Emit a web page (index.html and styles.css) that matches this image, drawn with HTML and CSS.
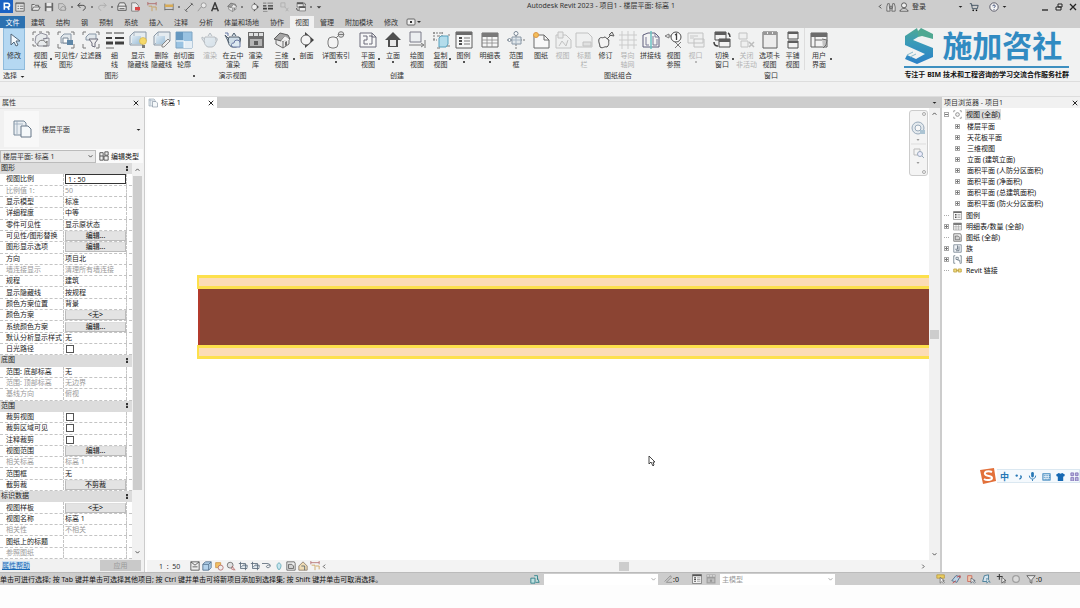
FILE: index.html
```html
<!DOCTYPE html>
<html lang="zh-CN">
<head>
<meta charset="utf-8">
<title>Autodesk Revit 2023</title>
<link rel="stylesheet" href="styles.css">
</head>
<body>
<svg class="defs" aria-hidden="true">
  <defs>
    <linearGradient id="lg" x1="0" y1="0" x2="1" y2="1"><stop offset="0" stop-color="#dbe9f4"/><stop offset="1" stop-color="#8fb6d3"/></linearGradient>
    <linearGradient id="sg" x1="0" y1="0" x2="0" y2="1"><stop offset="0" stop-color="#4fa892"/><stop offset=".4" stop-color="#3a9bb8"/><stop offset="1" stop-color="#2b80c8"/></linearGradient>
  </defs>
  <symbol id="arrow" viewBox="0 0 18 18"><path d="M6 3v11l3-3 2 4 2-1-2-4h4z" fill="#fff" stroke="#456" stroke-width="1"/></symbol>
  <symbol id="template" viewBox="0 0 18 18"><path d="M1 4V1h3M7 1h3M1 7v3M1 13v2h3M14 1h3v3" class="s"/><path d="M4 5l5-3 6 2v3l-4 1 6-1v8H6l-3-4z" fill="#e6e9eb" stroke="#667" stroke-width=".8"/><path d="M6 15a4 4 0 0 1 8-3l1-2v5h-4" class="s"/></symbol>
  <symbol id="visible" viewBox="0 0 18 18"><path d="M1 4V1h3M14 1h3v3M1 13v4h3M14 17h3v-4" class="s"/><path d="M4 6l3-3h7v9H4z" fill="#dfe6ea" stroke="#789"/><path d="M6 7h5v5H6z" fill="#fff" stroke="#678"/><path d="M10 9h6v5h-6z" fill="#46759a"/></symbol>
  <symbol id="filter" viewBox="0 0 18 18"><path d="M1 4V1h3M14 1h3v3M1 13v4h3M14 17h3v-4" class="s"/><path d="M4 6l3-3h7v6H4z" fill="#dfe6ea" stroke="#789"/><path d="M7 8h9l-3 4v4l-3-1v-3z" fill="#eee" stroke="#556"/></symbol>
  <symbol id="thin" viewBox="0 0 18 18"><path d="M0 2h6M8 2h10" stroke="#222" stroke-width="1"/><path d="M0 7h6M9 7h9" stroke="#222" stroke-width="2"/><path d="M0 12h7M9 12h9" stroke="#222" stroke-width="3"/><path d="M0 17h8" stroke="#555"/></symbol>
  <symbol id="showh" viewBox="0 0 18 18"><path d="M1 5l4-4h12v9l-4 4H1z" fill="#e4ebf0" stroke="#789"/><path d="M5 1v9h12M1 14l4-4" fill="none" stroke="#89a" stroke-width=".8"/><path d="M3 5h9v8H3z" fill="url(#lg)"/><circle cx="14" cy="10" r="3.500" fill="#f6d553" stroke="#c9a22c" stroke-width=".6"/><path d="M13 14h3v3h-3z" fill="#666"/></symbol>
  <symbol id="delh" viewBox="0 0 18 18"><path d="M1 5l4-4h12v9l-4 4H1z" fill="#e4ebf0" stroke="#789"/><path d="M5 1v9h12M1 14l4-4" fill="none" stroke="#89a" stroke-width=".8"/><path d="M3 5h9v8H3z" fill="url(#lg)"/><path d="M9 14l6-6 2 2-6 6H9z" fill="#eee" stroke="#777"/></symbol>
  <symbol id="cut" viewBox="0 0 18 18"><path d="M1 1h16v16H1z" fill="#8bbbe0" stroke="#6b98bb"/><path d="M1 1h7v8H1z" fill="#4e89b8"/><path d="M9 10h8v7H9z" fill="#e3eef6"/><path d="M1 10h8v7" fill="none" stroke="#fff"/></symbol>
  <symbol id="teapot" viewBox="0 0 18 18"><path d="M4 6c-2 5 0 9 3 10h4c4-1 5-6 3-10zM4 8L1 6v2l3 4M14 7c3-1 3 3 0 5M7 5l2-3 2 3" fill="url(#lg)" stroke="#345"/></symbol>
  <symbol id="cloudpot" viewBox="0 0 18 18"><path d="M5 6c-2 5 0 9 3 10h4c4-1 5-6 3-10zM5 8L1 4l4 8M15 7c2-2 2 3 0 5M8 5l2-3 2 3" fill="#c9d9e4" stroke="#345"/><path d="M1 2h3v3M10 12a3 3 0 0 1 6 0v4H9a2 2 0 0 1 1-4z" fill="#dbe8f1" stroke="#569"/></symbol>
  <symbol id="gallery" viewBox="0 0 18 18"><path d="M1 1h16v16H1z" fill="#555"/><path d="M2 2h4v3H2zM7 2h4v3H7zM12 2h4v3h-4z" fill="#ddd"/><path d="M3 8h12v7H3z" fill="#aaa"/><path d="M7 10h4v4H7z" fill="#444"/></symbol>
  <symbol id="house3" viewBox="0 0 18 18"><path d="M3 8v5l7 4 6-4V7l-6 3z" fill="#ececec" stroke="#555"/><path d="M10 10v7" stroke="#555"/><path d="M1 8l6-6 8 2 2 4-2 0-3-3-4 5z" fill="#999" stroke="#444"/><path d="M8 10l4-5 4 3v1l-6 1z" fill="#f4f4f4"/><path d="M12 11l2-1v4l-2 1z" fill="#555"/></symbol>
  <symbol id="section" viewBox="0 0 18 18"><path d="M7 1l9 8-9 8z" fill="#222"/><circle cx="8" cy="9" r="5" fill="#f6f6f6" stroke="#444"/></symbol>
  <symbol id="callout" viewBox="0 0 18 18"><rect x="1" y="6" width="10" height="11" rx="4" fill="#f4f4f4" stroke="#666"/><path d="M9 7l3-3" class="s"/><circle cx="14" cy="3.500" r="2.800" fill="#ddd" stroke="#666"/><path d="M11 3.500h6" class="s"/></symbol>
  <symbol id="plan" viewBox="0 0 18 18"><path d="M1 2h12l4 4v10H1z" fill="#f8f8f8" stroke="#556"/><path d="M4 5h4v4H5v4h4M10 5h3v8h-3M13 2v4h4" fill="none" stroke="#556"/></symbol>
  <symbol id="elev" viewBox="0 0 18 18"><path d="M9 1l8 8h-3v7H4V9H1z" fill="#333"/><path d="M6 9h6v6H6z" fill="#e8e8e8"/></symbol>
  <symbol id="draft" viewBox="0 0 18 18"><path d="M2 1h11v10H2z" fill="#eceff1" stroke="#667"/><path d="M1 14h14M13 12l3 2-3 2M17 9v8" class="s"/></symbol>
  <symbol id="dup" viewBox="0 0 18 18"><path d="M1 2h10M2 1v9M10 1v4M1 9h4" class="s" stroke-dasharray="2 1"/><path d="M7 7l2-2h7v8l-2 3H7z" fill="#a9d9ea" stroke="#3d94b5"/><path d="M5 5h3M15 15h3M5 17h3M16 4h2" class="s"/></symbol>
  <symbol id="legend" viewBox="0 0 18 18"><path d="M1 1h16v16H1z" fill="#f8f8f8" stroke="#444"/><path d="M1 1h16v3H1z" fill="#555"/><path d="M4 7h3M4 10h3M4 13h3" stroke="#333" stroke-width="2"/><path d="M9 7h6M9 10h6M9 13h6" stroke="#666"/></symbol>
  <symbol id="sched" viewBox="0 0 18 18"><path d="M1 2h16v14H1z" fill="#f8f8f8" stroke="#555"/><path d="M1 2h16v4H1z" fill="#666"/><path d="M1 9h16M1 12h16M6 6v10M11 6v10" stroke="#777" stroke-width=".8"/></symbol>
  <symbol id="scope" viewBox="0 0 18 18"><path d="M9 0v18M0 9h18" class="s" stroke-dasharray="3 1"/><path d="M5 6h9v7H5z" fill="#dfe6ea" stroke="#789"/><path d="M9 6v7M5 9h9" stroke="#9ab"/><circle cx="9" cy="2.500" r="2" fill="#fff" stroke="#678"/><circle cx="2.500" cy="9" r="1.500" fill="#fff" stroke="#678"/></symbol>
  <symbol id="sheet" viewBox="0 0 18 18"><path d="M2 4h10l5 5v8H2z" fill="#fafafa" stroke="#555"/><path d="M12 4v5h5" fill="none" stroke="#555"/><circle cx="4" cy="4" r="2.500" fill="#f4b740" stroke="#d8862a"/></symbol>
  <symbol id="vsheet" viewBox="0 0 18 18"><path d="M2 4h10l5 5v8H2z" fill="#eee" stroke="#555"/><path d="M4 1h5v6H4zM5 15l3-5 4 5 2-6" fill="#ddd" stroke="#555"/></symbol>
  <symbol id="titleblk" viewBox="0 0 18 18"><path d="M1 2h12l4 4v10H1z" fill="#eee" stroke="#555"/><path d="M8 11h8v4H8z" fill="#bbb" stroke="#555"/></symbol>
  <symbol id="rev" viewBox="0 0 18 18"><path d="M2 8c2-3 4 0 5-2 3 0 3 3 5 3-1 3 1 4-2 7-3-1-4 2-7 0 0-3-2-5-1-8z" fill="#f4f4f4" stroke="#333"/><path d="M10 8l4-4M12 4l3-3 2 4z" fill="#ddd" stroke="#444"/></symbol>
  <symbol id="grid" viewBox="0 0 18 18"><path d="M3 0v18M9 0v18M15 0v18M0 4h18M0 9h18M0 14h18" stroke="#777" fill="none"/></symbol>
  <symbol id="match" viewBox="0 0 18 18"><path d="M1 4l5-2h7l4 4v10H1z" fill="#f4f4f4" stroke="#446"/><path d="M4 6v8h3M13 2v4h4M11 5v9h4V8" fill="none" stroke="#668"/><path d="M9 0v18" stroke="#5bb" stroke-width="1.500"/></symbol>
  <symbol id="vref" viewBox="0 0 18 18"><path d="M0 5l4-2v4zM4 5h2M10 11l6 6M16 11l-6 6" class="s"/><circle cx="11" cy="6" r="5" fill="#fff" stroke="#333"/><path d="M10 4l1.500-1v6" stroke="#222" fill="none" stroke-width="1.300"/></symbol>
  <symbol id="viewport" viewBox="0 0 18 18"><path d="M1 2h15v10H1zM7 8h10v8H7z" fill="#eee" stroke="#555"/><path d="M3 5h8M3 7h4" class="s"/></symbol>
  <symbol id="switch" viewBox="0 0 18 18"><path d="M2 1h11v8H2zM6 8h11v8H6z" fill="#f4f4f4" stroke="#333"/><path d="M2 1h11v3H2zM6 8h11v3H6z" fill="#444"/><path d="M15 2c2 1 2 2 2 4M1 11c0 3 1 4 4 4" fill="none" stroke="#222" stroke-width="1.500"/></symbol>
  <symbol id="closew" viewBox="0 0 18 18"><path d="M1 2h8v6H1zM3 10h7v6H3z" fill="#eee" stroke="#555"/><path d="M11 11l5 5M16 11l-5 5" stroke="#444" stroke-width="1.500"/></symbol>
  <symbol id="tabv" viewBox="0 0 18 18"><path d="M2 1h14v16H2z" fill="#ececec" stroke="#444"/><path d="M2 1h14v3H2z" fill="#888"/><path d="M6 1h1v2H6zM11 1h1v2h-1z" fill="#eee"/></symbol>
  <symbol id="tile" viewBox="0 0 18 18"><path d="M4 1h10v7H4zM4 10h10v7H4z" fill="#f4f4f4" stroke="#333"/><path d="M4 1h10v2H4zM4 10h10v2H4z" fill="#444"/></symbol>
  <symbol id="ui" viewBox="0 0 18 18"><path d="M1 2h16v14H1z" fill="#f4f4f4" stroke="#444"/><path d="M1 2h16v4H1z" fill="#555"/><path d="M5 6v10M5 9h7" stroke="#555"/><path d="M12 8l5 1-1 5-3 3" fill="#bbb" stroke="#555"/></symbol>

  <symbol id="q-list" viewBox="0 0 12 12"><path d="M1 1h10v10H1z" fill="#eee" stroke="#444"/><path d="M1 2h10M3 5h2M6 5h4M3 8h2M6 8h4" stroke="#444"/></symbol>
  <symbol id="q-open" viewBox="0 0 12 12"><path d="M1 10V3h3l1 1h4v2M1 10l2-4h8l-2 4z" fill="#eee" stroke="#444"/></symbol>
  <symbol id="q-save" viewBox="0 0 12 12"><path d="M1 1h10v10H1z" fill="#555"/><path d="M3 1h6v4H3zM3 7h6v4H3z" fill="#eee"/></symbol>
  <symbol id="q-sync" viewBox="0 0 12 12"><path d="M2 2h5l3 3v5H4L2 8z" fill="#ccc" stroke="#888"/><path d="M5 10a3 3 0 1 1 5 0" fill="none" stroke="#888"/></symbol>
  <symbol id="q-undo" viewBox="0 0 12 12"><path d="M4 1L1 4l3 3M1 4h6c4 0 4 5 0 6" fill="none" stroke="#333" stroke-width="1.200"/></symbol>
  <symbol id="q-redo" viewBox="0 0 12 12"><path d="M8 1l3 3-3 3M11 4H5C1 4 1 9 5 10" fill="none" stroke="#aaa" stroke-width="1.200"/></symbol>
  <symbol id="q-print" viewBox="0 0 12 12"><path d="M3 1h6l2 4v5H1V5z" fill="#eee" stroke="#333"/><path d="M1 5h10M3 8h6" stroke="#333"/></symbol>
  <symbol id="q-pdf" viewBox="0 0 12 12"><path d="M2 1h5l3 3v7H2z" fill="#eee" stroke="#666"/><path d="M6 6h6v4H6z" fill="#d33"/></symbol>
  <symbol id="q-meas" viewBox="0 0 12 12"><path d="M1 2h10M1 0v4M11 0v4" stroke="#a55" fill="none"/><path d="M2 5h4v6M7 6h4v4" stroke="#c7903d" fill="none"/></symbol>
  <symbol id="q-dim" viewBox="0 0 12 12"><path d="M1 2v8M11 2v8M1 9h10" stroke="#555" fill="none"/><path d="M1 3h10v3H1z" fill="#d9a441"/></symbol>
  <symbol id="q-align" viewBox="0 0 12 12"><path d="M2 10l8-8M1 9l3 3M8 1l3 3" stroke="#333" fill="none"/></symbol>
  <symbol id="q-tag" viewBox="0 0 12 12"><path d="M1 11l4-5" stroke="#888"/><circle cx="8" cy="4" r="3" fill="#eee" stroke="#888"/></symbol>
  <symbol id="q-a" viewBox="0 0 12 12"><path d="M2 11L6 1l4 10M4 8h4" fill="none" stroke="#222" stroke-width="1.800"/></symbol>
  <symbol id="q-close" viewBox="0 0 12 12"><path d="M1 1h5v5H1zM6 6l4 5M10 7l-3 4" fill="none" stroke="#aaa"/></symbol>
  <symbol id="bino" viewBox="0 0 12 12"><path d="M2 2h2v3l1 6H1V6zM8 2h2l1 4v5H7l1-6zM5 5h2v3H5z" fill="#ddd" stroke="#444" stroke-width=".8"/></symbol>
  <symbol id="user" viewBox="0 0 12 12"><circle cx="6" cy="4" r="3" fill="#eee" stroke="#444"/><path d="M1 11c1-4 9-4 10 0z" fill="#eee" stroke="#444"/></symbol>
  <symbol id="cart" viewBox="0 0 12 12"><path d="M1 2h2l1 6h6l1-4H3" fill="none" stroke="#345"/><circle cx="5" cy="10" r="1"/><circle cx="9" cy="10" r="1"/></symbol>
  <symbol id="help" viewBox="0 0 12 12"><circle cx="6" cy="6" r="5" fill="#f4f4f4" stroke="#445"/><path d="M4.500 5c0-2 3-2 3 0 0 1-1.500 1-1.500 2M6 8.500v1" fill="none" stroke="#236"/></symbol>
  <symbol id="x" viewBox="0 0 8 8"><path d="M1 1l6 6M7 1L1 7" stroke="#222" stroke-width="1.300"/></symbol>
  <symbol id="restore" viewBox="0 0 8 8"><path d="M3 1h4v3H3zM1 4h5v3H1z" fill="#ddd" stroke="#222"/></symbol>
  <symbol id="min" viewBox="0 0 8 8"><path d="M1 7h6" stroke="#222" stroke-width="1.300"/></symbol>
  <symbol id="down" viewBox="0 0 8 8"><path d="M1 3h6L4 6z" fill="#222"/></symbol>
  <symbol id="cup" viewBox="0 0 8 8"><path d="M1 6l3-3 3 3" fill="none" stroke="#333" stroke-width="1.300"/></symbol>
  <symbol id="cdown" viewBox="0 0 8 8"><path d="M1 2l3 3 3-3" fill="none" stroke="#333" stroke-width="1.300"/></symbol>
  <symbol id="cright" viewBox="0 0 8 8"><path d="M2 1l3 3-3 3" fill="none" stroke="#222" stroke-width="1.300"/></symbol>
  <symbol id="cleft" viewBox="0 0 8 8"><path d="M5 1L2 4l3 3" fill="none" stroke="#222" stroke-width="1.300"/></symbol>
  <symbol id="pages" viewBox="0 0 20 20"><path d="M2 2h10l2 2v12H2z" fill="#e9eef2" stroke="#789"/><path d="M9 7h7l3 3v8H9z" fill="#f5f8fa" stroke="#678"/><path d="M2 5h9M5 2v13" stroke="#9ab" stroke-width=".8"/></symbol>
  <symbol id="etype" viewBox="0 0 12 12"><path d="M1 2h4v9H1zM7 1h4v4H7zM6 6h5v5H6zM1 6h4" fill="#eee" stroke="#444"/></symbol>
  <symbol id="t-views" viewBox="0 0 12 12"><path d="M1 3V1h2M9 1h2v2M1 9v2h2M9 11h2V9" fill="none" stroke="#666"/><circle cx="6" cy="6" r="2.500" fill="#eee" stroke="#666"/></symbol>
  <symbol id="t-sheet" viewBox="0 0 12 12"><path d="M1 1h9l1 2v8H1z" fill="#eee" stroke="#444"/><path d="M3 4h4l2 2v3H3z" fill="#ccc" stroke="#444"/></symbol>
  <symbol id="t-fam" viewBox="0 0 12 12"><path d="M1 1h10v10H1z" fill="#eef2f5" stroke="#567"/><path d="M6 2v5H3M8 3v6H4" fill="none" stroke="#345"/></symbol>
  <symbol id="t-grp" viewBox="0 0 12 12"><path d="M3 1H1v10h2M9 1h2v10H9M4 3h3v3H4zM6 7h3v3" fill="none" stroke="#456"/></symbol>
  <symbol id="t-link" viewBox="0 0 12 12"><path d="M1 4h4v4H1zM7 4h4v4H7zM4 6h4" fill="#f0d66a" stroke="#b8982a" stroke-width="1.200"/></symbol>
  <symbol id="cube" viewBox="0 0 12 12"><path d="M1 4l3-3h7v7l-3 3H1zM1 4h7v7M8 4l3-3" fill="#a9cdea" stroke="#357"/></symbol>
  <symbol id="mail" viewBox="0 0 12 12"><path d="M1 1h10v10H1zM1 1l5 4 5-4M3 7h6" fill="#eee" stroke="#333"/></symbol>
  <symbol id="sun" viewBox="0 0 12 12"><path d="M2 2h6v6H2z" fill="#f2b84b" stroke="#c8842a"/><circle cx="8" cy="8" r="3" fill="#eee" stroke="#a55"/></symbol>
  <symbol id="shadow" viewBox="0 0 12 12"><circle cx="5" cy="5" r="3.500" fill="#ddd" stroke="#555"/><path d="M6 9l4 2M7 6l4 5" stroke="#a44"/></symbol>
  <symbol id="crop" viewBox="0 0 12 12"><path d="M3 1v8h8M1 3h8v8M4 7l2-2h5v3" fill="#cfdbe4" stroke="#456"/></symbol>
  <symbol id="glass" viewBox="0 0 12 12"><path d="M0 3h6c5 0 5 5 1 5-3 0-2-4 3-3" fill="none" stroke="#456"/></symbol>
  <symbol id="bulb" viewBox="0 0 12 12"><path d="M6 2c3 2 3 4 1 8H5C3 6 3 4 6 2z" fill="#bfe3ee" stroke="#49a"/></symbol>
  <symbol id="house" viewBox="0 0 12 12"><path d="M1 6l5-5 5 5v5H1z" fill="#f0d9a8" stroke="#765"/><path d="M4 6h4v5" fill="none" stroke="#345"/></symbol>
  <symbol id="ptr" viewBox="0 0 12 12"><path d="M1 1h9v4H1z" fill="#f0cf4d" stroke="#b8922a"/><path d="M5 4v7l2-2 2 2 1-1-2-2h2z" fill="#fff" stroke="#444" stroke-width=".8"/></symbol>
  <symbol id="ptr2" viewBox="0 0 12 12"><path d="M1 8l5-6 5 1-4 7z" fill="#b9d6ec" stroke="#357"/><path d="M7 4l4-2v3M2 11l4-3" stroke="#c33" fill="none"/></symbol>
  <symbol id="ptr3" viewBox="0 0 12 12"><path d="M2 2h5v7H2z" fill="#f5c7a8" stroke="#c54"/><path d="M6 5v6l2-2 2 2 1-1-2-2h2z" fill="#fff" stroke="#345" stroke-width=".8"/></symbol>
  <symbol id="ptr4" viewBox="0 0 12 12"><path d="M2 9l2-7 5-1v8z" fill="#d6e8f4" stroke="#268"/><path d="M7 5v6l2-2 2 1-2-3z" fill="#fff" stroke="#268" stroke-width=".8"/></symbol>
  <symbol id="ptr5" viewBox="0 0 12 12"><path d="M4 0v7M1 3h7" stroke="#222" stroke-width="1.300"/><path d="M7 4v7l2-2 1 2 1-1-1-2h2z" fill="#fff" stroke="#222" stroke-width=".8"/></symbol>
  <symbol id="ring" viewBox="0 0 12 12"><circle cx="6" cy="6" r="4" fill="#ddd" stroke="#999" stroke-width="1.500"/></symbol>
  <symbol id="funnel" viewBox="0 0 12 12"><path d="M1 2h10L7 7v4L5 10V7z" fill="#eee" stroke="#444"/></symbol>
  <symbol id="wset" viewBox="0 0 12 12"><path d="M1 5h5v6H1zM5 2h4v5M9 5l2 5H7" fill="#bfe0e0" stroke="#267d86"/></symbol>
  <symbol id="pencil" viewBox="0 0 12 12"><path d="M2 9l7-7 1 2-6 6h7" fill="none" stroke="#888"/></symbol>
</svg>

<header class="titlebar">
  <button class="app" aria-label="Revit"><svg viewBox="0 0 12 12"><path d="M0 0h12v12H0z" fill="#1c62c4"/><path d="M4 9V3h3a1.500 1.500 0 0 1 0 3.500H4M7 6.500L8.500 9" fill="none" stroke="#fff" stroke-width="1.500"/></svg></button>
  <div class="quick">
    <svg><use href="#q-list"/></svg><svg class="g5"><use href="#q-open"/></svg><svg class="g3"><use href="#q-save"/></svg><svg class="g3"><use href="#q-sync"/></svg><i></i>
    <svg class="g3"><use href="#q-undo"/></svg><i></i><svg class="g3"><use href="#q-redo"/></svg><i></i>
    <svg class="g3"><use href="#q-print"/></svg><svg class="g3"><use href="#q-pdf"/></svg><svg class="g8"><use href="#q-meas"/></svg><svg class="g8"><use href="#q-dim"/></svg><i></i>
    <svg class="g3"><use href="#q-align"/></svg><svg class="g3"><use href="#q-tag"/></svg><svg class="g3"><use href="#q-a"/></svg><svg class="g8"><use href="#house3"/></svg><i></i><svg class="g5"><use href="#section"/></svg><svg class="g3"><use href="#thin"/></svg><svg class="g8"><use href="#q-close"/></svg><svg class="g5"><use href="#switch"/></svg><i></i><svg class="small g3"><use href="#down"/></svg>
  </div>
  <h1>Autodesk Revit 2023 - 项目1 - 楼层平面: 标高 1</h1>
  <div class="account">
    <svg class="tiny"><use href="#cleft"/></svg><svg><use href="#bino"/></svg><svg><use href="#user"/></svg><span>登录</span>
    <svg class="tiny acc-gap"><use href="#down"/></svg><svg><use href="#cart"/></svg><svg class="help"><use href="#help"/></svg><svg class="tiny"><use href="#down"/></svg>
  </div>
  <div class="win">
    <button aria-label="最小化"><svg><use href="#min"/></svg></button><button aria-label="还原"><svg><use href="#restore"/></svg></button><button aria-label="关闭"><svg><use href="#x"/></svg></button>
  </div>
</header>

<nav class="tabs">
  <button class="file">文件</button>
  <button>建筑</button><button>结构</button><button>钢</button><button>预制</button><button>系统</button><button>插入</button><button>注释</button><button>分析</button><button>体量和场地</button><button>协作</button><button class="on">视图</button><button>管理</button><button>附加模块</button><button>修改</button>
  <button class="toggle" aria-label="显示选项"><svg viewBox="0 0 16 8"><rect x="1" y="1" width="8" height="6" rx="1" fill="#eee" stroke="#666"/><path d="M4 3h2v2H4zM11 3h4l-2 2z" fill="#333"/></svg></button>
</nav>

<section class="ribbon">
  <div class="group sel">
    <div class="tools"><button class="tool on"><svg><use href="#arrow"/></svg><span>修改</span></button></div>
    <h2>选择 <svg class="tiny"><use href="#down"/></svg></h2>
  </div>
  <div class="group">
    <div class="tools">
      <button class="tool w25 side"><svg><use href="#template"/></svg><span>视图<br>样板</span></button>
      <button class="tool w26"><svg><use href="#visible"/></svg><span>可见性/<br>图形</span></button>
      <button class="tool w24"><svg><use href="#filter"/></svg><span>过滤器</span></button>
      <button class="tool w23"><svg><use href="#thin"/></svg><span>细<br>线</span></button>
      <button class="tool w24"><svg><use href="#showh"/></svg><span>显示<br>隐藏线</span></button>
      <button class="tool w23"><svg><use href="#delh"/></svg><span>删除<br>隐藏线</span></button>
      <button class="tool w22"><svg><use href="#cut"/></svg><span>剖切面<br>轮廓</span></button>
    </div>
    <h2 class="launch">图形</h2>
  </div>
  <div class="group gap3">
    <div class="tools">
      <button class="tool w24" disabled><svg><use href="#teapot"/></svg><span>渲染</span></button>
      <button class="tool w22"><svg><use href="#cloudpot"/></svg><span>在云中<br>渲染</span></button>
      <button class="tool w23"><svg><use href="#gallery"/></svg><span>渲染<br>库</span></button>
    </div>
    <h2>演示视图</h2>
  </div>
  <div class="group">
    <div class="tools">
      <button class="tool w29 side"><svg><use href="#house3"/></svg><span>三维<br>视图</span></button>
      <button class="tool w21"><svg><use href="#section"/></svg><span>剖面</span></button>
      <button class="tool w38 under"><svg><use href="#callout"/></svg><span>详图索引</span></button>
      <button class="tool w26 side"><svg><use href="#plan"/></svg><span>平面<br>视图</span></button>
      <button class="tool w24 under"><svg><use href="#elev"/></svg><span>立面</span></button>
      <button class="tool w24"><svg><use href="#draft"/></svg><span>绘图<br>视图</span></button>
      <button class="tool w23 side"><svg><use href="#dup"/></svg><span>复制<br>视图</span></button>
      <button class="tool w23 under"><svg><use href="#legend"/></svg><span>图例</span></button>
      <button class="tool w30 under"><svg><use href="#sched"/></svg><span>明细表</span></button>
      <button class="tool w22"><svg><use href="#scope"/></svg><span>范围<br>框</span></button>
    </div>
    <h2>创建</h2>
  </div>
  <div class="group gap3">
    <div class="tools">
      <button class="tool w22"><svg><use href="#sheet"/></svg><span>图纸</span></button>
      <button class="tool w21" disabled><svg><use href="#vsheet"/></svg><span>视图</span></button>
      <button class="tool w22" disabled><svg><use href="#titleblk"/></svg><span>标题<br>栏</span></button>
      <button class="tool w21"><svg><use href="#rev"/></svg><span>修订</span></button>
      <button class="tool w23" disabled><svg><use href="#grid"/></svg><span>导向<br>轴网</span></button>
      <button class="tool w23"><svg><use href="#match"/></svg><span>拼接线</span></button>
      <button class="tool w23"><svg><use href="#vref"/></svg><span>视图<br>参照</span></button>
      <button class="tool w21 under" disabled><svg><use href="#viewport"/></svg><span>视口</span></button>
    </div>
    <h2>图纸组合</h2>
  </div>
  <div class="group gap3">
    <div class="tools">
      <button class="tool w26 side"><svg><use href="#switch"/></svg><span>切换<br>窗口</span></button>
      <button class="tool w23" disabled><svg><use href="#closew"/></svg><span>关闭<br>非活动</span></button>
      <button class="tool w23"><svg><use href="#tabv"/></svg><span>选项卡<br>视图</span></button>
      <button class="tool w23"><svg><use href="#tile"/></svg><span>平铺<br>视图</span></button>
      <button class="tool w29 side split"><svg><use href="#ui"/></svg><span>用户<br>界面</span></button>
    </div>
    <h2>窗口</h2>
  </div>
  <div class="brand">
    <div class="brand-row">
      <svg viewBox="0 0 30 36"><path d="M29 11V6L17 0l-3 3v6l4-1z" fill="#4fa892"/><path d="M13 0L1 8v9l20 9-9 5-9-4-2 4 12 5 16-7v-9L9 12l5-3V3z" fill="url(#sg)"/><path d="M3 27l6-3M6 29l6-3" stroke="#8bc" fill="none"/></svg>
      <strong>施加咨社</strong>
    </div>
    <p>专注于 BIM 技术和工程咨询的学习交流合作服务社群</p>
  </div>
</section>
<div class="options"></div>

<main class="work">
  <aside class="props">
    <header class="panel-head"><h2>属性</h2><button aria-label="关闭"><svg><use href="#x"/></svg></button></header>
    <div class="type"><span class="thumb"><svg><use href="#pages"/></svg></span><span class="type-name">楼层平面</span><svg class="tiny"><use href="#down"/></svg></div>
    <div class="inst"><span class="pick"><select aria-label="实例"><option>楼层平面: 标高 1</option></select><svg class="tiny"><use href="#cdown"/></svg></span><button><svg><use href="#etype"/></svg>编辑类型</button></div>
    <div class="sheet">
      <table>
        <tbody>
        <tr class="cat"><th colspan="3">图形</th></tr>
        <tr><th>视图比例</th><td><input class="scale" aria-label="视图比例" value="1 : 50"></td><td></td></tr>
        <tr class="off"><th>比例值 1:</th><td>50</td><td></td></tr>
        <tr><th>显示模型</th><td>标准</td><td></td></tr>
        <tr><th>详细程度</th><td>中等</td><td></td></tr>
        <tr><th>零件可见性</th><td>显示原状态</td><td></td></tr>
        <tr><th>可见性/图形替换</th><td><button>编辑...</button></td><td></td></tr>
        <tr><th>图形显示选项</th><td><button>编辑...</button></td><td></td></tr>
        <tr><th>方向</th><td>项目北</td><td></td></tr>
        <tr class="off"><th>墙连接显示</th><td>清理所有墙连接</td><td></td></tr>
        <tr><th>规程</th><td>建筑</td><td></td></tr>
        <tr><th>显示隐藏线</th><td>按规程</td><td></td></tr>
        <tr><th>颜色方案位置</th><td>背景</td><td></td></tr>
        <tr><th>颜色方案</th><td><button>&lt;无&gt;</button></td><td></td></tr>
        <tr><th>系统颜色方案</th><td><button>编辑...</button></td><td></td></tr>
        <tr><th>默认分析显示样式</th><td>无</td><td></td></tr>
        <tr><th><label for="c1">日光路径</label></th><td><input type="checkbox" id="c1"></td><td></td></tr>
        <tr class="cat"><th colspan="3">底图</th></tr>
        <tr><th>范围: 底部标高</th><td>无</td><td></td></tr>
        <tr class="off"><th>范围: 顶部标高</th><td>无边界</td><td></td></tr>
        <tr class="off"><th>基线方向</th><td>俯视</td><td></td></tr>
        <tr class="cat"><th colspan="3">范围</th></tr>
        <tr><th><label for="c2">裁剪视图</label></th><td><input type="checkbox" id="c2"></td><td></td></tr>
        <tr><th><label for="c3">裁剪区域可见</label></th><td><input type="checkbox" id="c3"></td><td></td></tr>
        <tr><th><label for="c4">注释裁剪</label></th><td><input type="checkbox" id="c4"></td><td></td></tr>
        <tr><th>视图范围</th><td><button>编辑...</button></td><td></td></tr>
        <tr class="off"><th>相关标高</th><td>标高 1</td><td></td></tr>
        <tr><th>范围框</th><td>无</td><td></td></tr>
        <tr><th>截剪裁</th><td><button>不剪裁</button></td><td></td></tr>
        <tr class="cat"><th colspan="3">标识数据</th></tr>
        <tr><th>视图样板</th><td><button>&lt;无&gt;</button></td><td></td></tr>
        <tr><th>视图名称</th><td>标高 1</td><td></td></tr>
        <tr class="off"><th>相关性</th><td>不相关</td><td></td></tr>
        <tr><th>图纸上的标题</th><td></td><td></td></tr>
        <tr class="off"><th>参照图纸</th><td></td><td></td></tr>
        </tbody>
      </table>
      <div class="vbar"><svg class="tiny"><use href="#cup"/></svg><span class="grip"></span><svg class="tiny"><use href="#cdown"/></svg></div>
    </div>
    <footer><a href="#">属性帮助</a><button disabled>应用</button></footer>
  </aside>

  <section class="view">
    <div class="doc-tabs"><div class="doc"><svg class="doc-icon"><use href="#pages"/></svg><span>标高 1</span><button aria-label="关闭"><svg><use href="#x"/></svg></button></div><svg class="tiny"><use href="#down"/></svg></div>
    <div class="stage">
      <div class="canvas">
        <div class="wall"><span></span><b></b><span></span></div>
        <div class="navbar"><svg viewBox="0 0 17 64"><circle cx="14" cy="3" r="1.500" fill="none" stroke="#aaa"/><circle cx="8" cy="17" r="6" fill="#e4eaee" stroke="#9ab"/><circle cx="8" cy="17" r="3" fill="#f8f8f8" stroke="#9ab"/><path d="M10 19h5v4h-5z" fill="#acc4d3"/><path d="M6.500 28h3L8 30zM6.500 51h3L8 53z" fill="#999"/><path d="M1 33h15" stroke="#ddd"/><path d="M4 38h6v6H4z" fill="none" stroke="#bbb"/><circle cx="10" cy="43" r="2.500" fill="#eef" stroke="#9ab"/><path d="M12 45l2 2" stroke="#9ab"/><circle cx="14" cy="61" r="1.500" fill="none" stroke="#aaa"/></svg></div>
        <svg class="cursor" viewBox="0 0 8 12"><path d="M1 1v8l2-2 2 4 1-1-1-3h2z" fill="#fff" stroke="#333" stroke-width=".9"/></svg>
      </div>
      <div class="vbar"><svg class="tiny"><use href="#cup"/></svg><span class="grip"></span><svg class="tiny"><use href="#cdown"/></svg></div>
    </div>
    <div class="view-bar">
      <span class="ratio">1&nbsp; :&nbsp; 50</span>
      <svg><use href="#mail"/></svg><svg><use href="#cube"/></svg><svg><use href="#sun"/></svg><svg><use href="#shadow"/></svg><svg><use href="#crop"/></svg><svg><use href="#crop"/></svg><svg><use href="#glass"/></svg><svg><use href="#bulb"/></svg><svg><use href="#t-sheet"/></svg><svg><use href="#house"/></svg><svg><use href="#q-meas"/></svg><svg class="tiny"><use href="#cleft"/></svg>
      <div class="hbar"><span class="grip"></span></div><svg class="tiny"><use href="#cright"/></svg>
    </div>
  </section>

  <aside class="browser">
    <header class="panel-head"><h2>项目浏览器 - 项目1</h2><button aria-label="关闭"><svg><use href="#x"/></svg></button></header>
    <ul class="tree">
      <li><div><button class="ex minus" aria-label="折叠"></button><svg><use href="#t-views"/></svg><span class="cur">视图 (全部)</span></div>
        <ul>
          <li><button class="ex" aria-label="展开"></button><span>楼层平面</span></li>
          <li><button class="ex" aria-label="展开"></button><span>天花板平面</span></li>
          <li><button class="ex" aria-label="展开"></button><span>三维视图</span></li>
          <li><button class="ex" aria-label="展开"></button><span>立面 (建筑立面)</span></li>
          <li><button class="ex" aria-label="展开"></button><span>面积平面 (人防分区面积)</span></li>
          <li><button class="ex" aria-label="展开"></button><span>面积平面 (净面积)</span></li>
          <li><button class="ex" aria-label="展开"></button><span>面积平面 (总建筑面积)</span></li>
          <li><button class="ex" aria-label="展开"></button><span>面积平面 (防火分区面积)</span></li>
        </ul></li>
      <li><div><i class="leaf"></i><svg><use href="#legend"/></svg><span>图例</span></div></li>
      <li><div><button class="ex" aria-label="展开"></button><svg><use href="#sched"/></svg><span>明细表/数量 (全部)</span></div></li>
      <li><div><i class="leaf"></i><svg><use href="#t-sheet"/></svg><span>图纸 (全部)</span></div></li>
      <li><div><button class="ex" aria-label="展开"></button><svg><use href="#t-fam"/></svg><span>族</span></div></li>
      <li><div><button class="ex" aria-label="展开"></button><svg><use href="#t-grp"/></svg><span>组</span></div></li>
      <li><div><i class="leaf"></i><svg><use href="#t-link"/></svg><span>Revit 链接</span></div></li>
    </ul>
    <div class="ime">
      <svg class="sogou" viewBox="0 0 18 18"><path d="M1 3l14-2 2 13-13 3z" fill="#e2703a"/><path d="M13 5c-4-2-8 0-7 2 1 3 7 1 7 4 0 2-5 3-8 1" fill="none" stroke="#fff" stroke-width="2"/></svg>
      <span class="ime-row"><b>中</b>
      <svg viewBox="0 0 10 10"><circle cx="3" cy="4" r="1.300" fill="#2677b5"/><path d="M7 4c2 1 1 3-1 4" fill="none" stroke="#2677b5" stroke-width="1.500"/></svg>
      <svg viewBox="0 0 10 10"><rect x="3.500" y="0" width="3" height="6" rx="1.500" fill="#2677b5"/><path d="M1.500 4c0 5 7 5 7 0M5 8v2" fill="none" stroke="#2677b5"/></svg>
      <svg viewBox="0 0 10 10"><rect x="1" y="2" width="8" height="7" fill="#eaf4fb" stroke="#2677b5"/><path d="M2 4h7M2 6h7M3 8h5" stroke="#2677b5" stroke-dasharray="1 1"/></svg>
      <svg viewBox="0 0 10 10"><path d="M0 3l3-2 2 1 2-1 3 2-1 2H8v5H2V5H1z" fill="#1769b3"/></svg>
      <svg viewBox="0 0 10 10"><path d="M1 1h3v3H1zM6 1h3v3H6zM1 6h3v4H1zM6 6h3v4H6z" fill="#b9b4dc" stroke="#8678bb"/></svg></span>
    </div>
  </aside>
</main>

<footer class="status">
  <p>单击可进行选择; 按 Tab 键并单击可选择其他项目; 按 Ctrl 键并单击可将新项目添加到选择集; 按 Shift 键并单击可取消选择。</p>
  <svg><use href="#wset"/></svg>
  <span class="pick set"><select aria-label="工作集"><option></option></select><svg class="tiny"><use href="#cdown"/></svg></span>
  <span class="edit"><svg><use href="#pencil"/></svg>:0</span>
  <svg><use href="#legend"/></svg><svg class="dim"><use href="#gallery"/></svg>
  <span class="pick opt"><select aria-label="设计选项"><option>主模型</option></select><svg class="tiny"><use href="#cdown"/></svg></span>
  <div class="sel-tools"><svg><use href="#ptr"/></svg><svg><use href="#ptr2"/></svg><svg><use href="#ptr3"/></svg><svg><use href="#ptr4"/></svg><svg><use href="#ptr5"/></svg><svg><use href="#ring"/></svg><span><svg><use href="#funnel"/></svg>:0</span></div>
</footer>
</body>
</html>
```
FILE: styles.css
```css
* { box-sizing: border-box; }
body {
  margin: 0;
  min-height: 100vh;
  display: flex;
  flex-direction: column;
  padding-bottom: 23px;
  background: #fdfdfd;
  color: #333;
  font: 7px/11px "Noto Sans", "Noto Sans CJK SC", sans-serif;
}
.defs { position: absolute; width: 0; height: 0; }
.s { fill: none; stroke: #666; }
h1, h2, p, ul { margin: 0; padding: 0; font-size: 7px; font-weight: 400; }
ul { list-style: none; }
button, input, select { font: inherit; color: inherit; margin: 0; padding: 0; border: 0; background: none; border-radius: 0; }
button { display: flex; align-items: center; justify-content: center; }
svg { display: block; flex: none; width: 10px; height: 10px; }
.tiny { width: 5px; height: 5px; }

/* title bar */
.titlebar { display: flex; align-items: center; height: 16px; background: #cdcdcd; padding-bottom: 3px; }
.app svg { width: 13px; height: 13px; }
.quick { display: flex; align-items: center; padding-left: 2px; width: 514px; }
.quick svg, .view-bar svg, .tree svg, .sel-tools svg { opacity: .85; }
.quick i { width: 2px; height: 2px; background: #666; margin-left: 4px; margin-right: 1px; border-radius: 1px; }
.quick .small { width: 6px; height: 6px; }
.g3 { margin-left: 3px; }
.g5 { margin-left: 6px; }
.g8 { margin-left: 7px; }
.titlebar h1 { line-height: 12px; white-space: nowrap; padding-bottom: 2px; }
.account { display: flex; align-items: center; gap: 3px; margin-left: auto; }
.account .acc-gap { margin-left: 29px; margin-right: 3px; }
.account .help { margin-left: 7px; }
.win { display: flex; gap: 6px; padding: 0 3px 0 34px; }
.win svg { width: 8px; height: 8px; }

/* ribbon tabs */
.tabs { display: flex; height: 12px; background: #cdcdcd; }
.tabs button { padding: 0 5px; margin-right: 1px; white-space: nowrap; }
.tabs .file { width: 25px; background: #2c71b0; color: #fff; }
.tabs .on { background: #f1f1f1; }
.tabs .toggle { padding: 0 2px; }
.tabs .toggle svg { width: 16px; height: 8px; }

/* ribbon */
.ribbon { display: flex; height: 54px; background: #f1f2f2; border-bottom: 1px solid #ddd; }
.group { display: flex; flex-direction: column; justify-content: space-between; }
.group h2 { line-height: 10px; text-align: center; }
.gap3 { margin-left: 3px; }
.launch { position: relative; }
.launch::after { content: ""; position: absolute; right: 0; top: 4px; width: 2px; height: 2px; background: #555; }
.tools { display: flex; }
.tool { flex-direction: column; justify-content: flex-start; align-items: center; height: 42px; padding-top: 3px; gap: 2px; line-height: 9px; position: relative; white-space: nowrap; }
.tool svg { width: 18px; height: 18px; opacity: .85; }
.tool span { text-align: center; }
.tool:disabled { opacity: .35; }
.tool.on { width: 22px; background: #b5d8f2; border: 1px solid #8fbbdc; padding-top: 2px; }
.sel { width: 28px; padding-left: 3px; }
.sel h2 { display: flex; align-items: center; gap: 3px; }
.side::after, .under::after { content: ""; position: absolute; width: 2px; height: 2px; background: #555; }
.side::after { right: 1px; bottom: 10px; }
.under::after { left: calc(50% - 1px); bottom: 7px; }
.split { border-left: 1px solid #ddd; }
.w21 { width: 21px; } .w22 { width: 22px; } .w23 { width: 23px; } .w24 { width: 24px; } .w25 { width: 25px; }
.w26 { width: 26px; } .w29 { width: 29px; } .w30 { width: 30px; } .w38 { width: 38px; }
.brand { margin-left: auto; padding-right: 11px; color: #111; white-space: nowrap; }
.brand-row { display: flex; align-items: flex-start; gap: 8px; height: 40px; border-bottom: 2px solid #3d8fc0; }
.brand-row svg { width: 30px; height: 36px; }
.brand strong { font: 700 30px/32px "Noto Sans CJK SC", sans-serif; color: #318bc2; }
.brand p { font-weight: 700; line-height: 13px; text-align: center; }
.options { height: 15px; background: #f1f1f1; border-bottom: 1px solid #ddd; }

/* work area */
.work { flex: 1; display: flex; min-height: 0; }
.panel-head { display: flex; align-items: center; justify-content: space-between; height: 11px; padding: 0 2px; background: #f1f1f1; }
.panel-head svg, .doc button svg { width: 6px; height: 6px; }
.vbar { display: flex; flex-direction: column; justify-content: space-between; align-items: center; background: #f1f1f1; padding: 3px 0; }
.grip { background: #cdcdcd; }

/* properties */
.props { width: 145px; display: flex; flex-direction: column; background: #f1f1f1; padding-right: 1px; border-right: 1px solid #ccc; }
.props .panel-head { padding-right: 4px; }
.type { display: flex; align-items: center; height: 41px; padding: 0 2px 0 4px; border-top: 1px solid #e2e2e2; }
.thumb { width: 35px; height: 36px; display: grid; place-items: center; background: #f8f8f8; }
.thumb svg { width: 20px; height: 20px; }
.type-name { flex: 1; padding-left: 3px; }
.inst { display: flex; align-items: center; height: 14px; background: #fafafa; }
.inst .pick { width: 96px; }
.inst button { gap: 2px; padding-left: 3px; white-space: nowrap; color: #111; }
.pick { position: relative; display: block; height: 13px; background: #e9e9e9; border: 1px solid #bbb; }
.pick select { appearance: none; width: 100%; height: 100%; padding-left: 2px; display: block; }
.pick .tiny { position: absolute; right: 2px; top: 3px; }
.sheet { flex: 1; display: flex; background: #fff; }
.sheet table { flex: 1; display: grid; grid-auto-rows: 1fr; border-spacing: 0; }
.sheet tbody { display: contents; }
.sheet tr { display: grid; grid-template-columns: 63px 1fr 6px; min-height: 0; border-bottom: 1px dashed #c4c4c4; color: #222; }
.sheet th, .sheet td { display: flex; align-items: center; padding: 0; min-width: 0; min-height: 0; font-weight: 400; line-height: 10px; white-space: nowrap; }
.sheet th { padding-left: 6px; }
.sheet td { border-left: 1px dashed #c4c4c4; padding-left: 1px; }
.sheet .cat { display: grid; grid-template-columns: 1fr; background: #dcdcdc; border-bottom-color: #dcdcdc; }
.sheet .cat th { padding: 0 4px 0 1px; justify-content: space-between; }
.sheet .cat th::after { content: ""; width: 2px; height: 5px; background: linear-gradient(#333 2px, #aaa 2px 3px, #333 3px); }
.sheet .off { color: #999; }
.sheet td button { flex: 1; height: 10px; background: #e3e3e3; border: 1px solid #bbb; border-top-color: #ddd; line-height: 8px; color: #111; }
.scale { width: 100%; height: 10px; border: 1px solid #333; padding-left: 2px; line-height: 8px; }
.sheet .scale { padding-left: 2px; }
.sheet [type="checkbox"] { appearance: none; width: 8px; height: 8px; border: 1px solid #555; background: #fff; margin-left: 1px; }
.sheet .vbar { width: 11px; padding: 4px 1px; }
.sheet .grip { width: 9px; flex: 1; margin: 4px 0 60px; }
.props > footer { display: flex; justify-content: space-between; align-items: center; height: 13px; padding: 0 2px; }
.props a { color: #1667b5; background: #cfe3f3; line-height: 9px; }
.props > footer button { width: 41px; height: 11px; background: #c9c9c9; color: #999; }

/* drawing view */
.view { flex: 1; min-width: 0; display: flex; flex-direction: column; background: #fff; margin-left: 2px; }
.doc-tabs { display: flex; align-items: center; justify-content: space-between; height: 11px; background: #cdcdcd; padding-right: 3px; }
.doc { display: flex; align-items: center; width: 70px; height: 11px; padding: 0 3px 0 1px; background: #fff; }
.doc span { flex: 1; padding-left: 3px; color: #111; }
.stage { flex: 1; display: flex; }
.canvas { flex: 1; position: relative; overflow: hidden; }
.wall { position: absolute; left: 50px; right: 0; top: 167px; display: flex; flex-direction: column; }
.wall span { height: 14px; background: #fcdcb6; border: solid #fde04c; border-width: 3px 0 3px 2px; }
.wall b { height: 56px; background: #8b4433; border-left: 2px solid #b23a2c; margin-left: 1px; }
.navbar { position: absolute; right: 1px; top: 2px; border: 1px solid #ccc; border-radius: 3px; background: #f4f4f4; }
.navbar svg { width: 17px; height: 64px; }
.cursor { position: absolute; left: 501px; top: 347px; width: 8px; height: 12px; }
.stage .vbar { width: 11px; }
.stage .grip { width: 9px; height: 9px; }
.view-bar { display: flex; align-items: center; height: 12px; gap: 2px; padding-right: 14px; background: #f3f3f3; }
.view-bar .ratio { padding: 0 8px 0 12px; }
.view-bar .hbar { flex: 1; display: flex; justify-content: center; }
.hbar .grip { width: 10px; height: 9px; }

/* project browser */
.browser { width: 140px; background: #fff; border-left: 2px solid #ccc; position: relative; }
.tree { padding: 1px 0 0 2px; color: #111; }
.tree div, .tree ul li { display: flex; align-items: center; height: 11px; }
.tree ul { padding: 1px 0 1px 11px; }
.tree svg { width: 9px; height: 9px; margin: 0 4px 0 4px; }
.tree span { white-space: nowrap; line-height: 11px; }
.tree ul span { margin-left: 7px; }
.tree .cur { background: #ddd; margin-left: -1px; padding: 0 1px; }
.ex { width: 5px; height: 5px; border: 1px solid #aaa; background: linear-gradient(#777, #777) center / 1px 3px no-repeat, linear-gradient(#777, #777) center / 3px 1px no-repeat; }
.minus { background: linear-gradient(#777, #777) center / 3px 1px no-repeat; }
.leaf { width: 5px; border-top: 1px dotted #aaa; }
.ime { position: absolute; right: 0; bottom: 87px; display: flex; align-items: center; }
.ime .sogou { width: 18px; height: 18px; }
.ime-row { display: flex; align-items: center; gap: 5px; height: 14px; padding-left: 3px; background: #f4f9fd; border: 1px solid #dbe8f1; border-left: 0; }
.ime b { font-size: 9px; color: #2677b5; }
.ime-row svg { width: 9px; height: 9px; }

/* status bar */
.status { display: flex; align-items: center; height: 13px; background: #cdcdcd; border-top: 1px solid #bbb; color: #111; }
.status p { width: 530px; white-space: nowrap; }
.status > svg { margin-right: 4px; }
.status .pick { height: 11px; background: #fff; border: 0; color: #999; }
.status .pick .tiny { opacity: .5; }
.set { width: 114px; }
.opt { width: 115px; }
.edit, .sel-tools span { display: flex; align-items: center; }
.edit { padding: 0 13px 0 5px; }
.dim { opacity: .4; }
.sel-tools { display: flex; gap: 5px; margin-left: auto; padding-right: 38px; }
```
